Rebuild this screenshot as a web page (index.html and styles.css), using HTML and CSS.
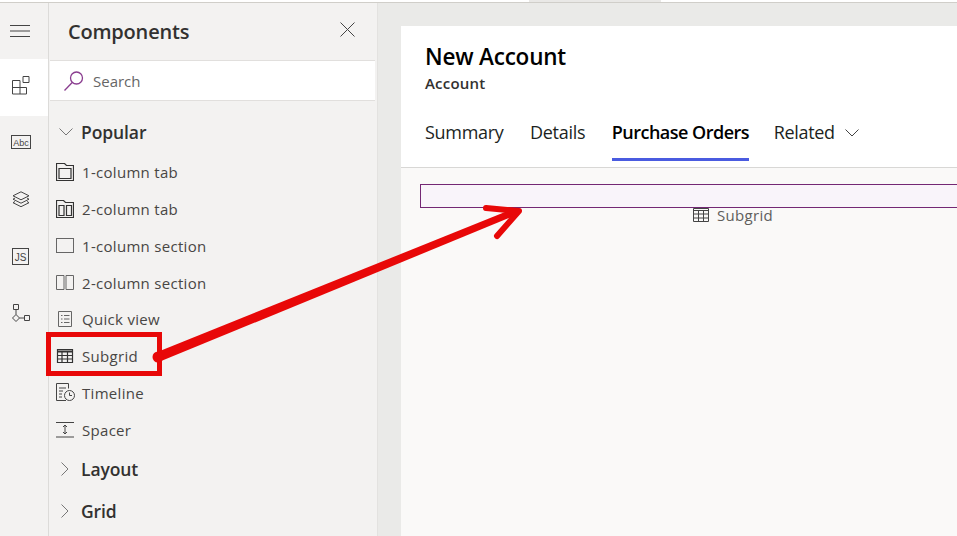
FILE: index.html
```html
<!DOCTYPE html>
<html lang="en">

<head>
    <meta charset="UTF-8">
    <title>New Account - Form Designer</title>
    <link rel="stylesheet" href="styles.css">
</head>

<body>
    <div class="top-strip"><span class="top-tab"></span></div>

    <div class="app">
        <nav class="rail">
            <div class="rail-menu">
                <svg width="20" height="12" viewBox="0 0 20 12"><path d="M0 .5h20M0 6h20M0 11.500h20" class="ico"/></svg>
            </div>
            <div class="rail-item rail-active">
                <svg width="20" height="20" viewBox="0 0 20 20"><path d="M1.500 5.500h7.500v7h6.500v6.500h-14zM1.500 12.500h7.500M9 12.500v6.500M12 1.500h6v6h-6z" class="ico"/></svg>
            </div>
            <div class="rail-item">
                <svg width="20" height="14" viewBox="0 0 20 14"><rect x=".5" y=".5" width="19" height="13" class="ico"/><text x="10" y="10.500" class="abc">Abc</text></svg>
            </div>
            <div class="rail-item">
                <svg width="18" height="17" viewBox="0 0 18 17"><path d="M9 .8l8 4-8 4-8-4zM3 7l-2 1.200 8 4 8-4-2-1.200M3 10.500l-2 1.200 8 4 8-4-2-1.200" class="ico"/></svg>
            </div>
            <div class="rail-item">
                <svg width="17" height="17" viewBox="0 0 17 17"><rect x=".5" y=".5" width="16" height="16" class="ico"/><text x="8.500" y="13" class="js">JS</text></svg>
            </div>
            <div class="rail-item">
                <svg width="18" height="18" viewBox="0 0 18 18"><path d="M1.500.5h5v5h-5zM4 5.500v5M4 10.500l3.500 3.500-3.500 3.500-3.500-3.500zM7.500 14h5M12.500 11.500h5v5h-5z" class="ico"/></svg>
            </div>
        </nav>

        <aside class="panel">
            <div class="panel-head">
                <h2>Components</h2>
                <svg width="15" height="15" viewBox="0 0 15 15"><path d="M.5.500l14 14M14.500.500l-14 14" class="ico"/></svg>
            </div>

            <div class="search">
                <svg width="20" height="20" viewBox="0 0 20 20"><circle cx="12.500" cy="7" r="6" class="ico-purple"/><path d="M8.200 11.500L.5 19.500" class="ico-purple"/></svg>
                <span>Search</span>
            </div>

            <div class="group">
                <svg width="14" height="8" viewBox="0 0 14 8"><path d="M.5.500L7 7l6.500-6.500" class="ico-light"/></svg>
                <span>Popular</span>
            </div>

            <ul class="items">
                <li>
                    <svg width="18" height="18" viewBox="0 0 18 18"><path d="M.5 17.500V.5h8l2 2h7v15zM3 5.500h12v10H3z" class="ico-dark"/></svg>
                    1-column tab
                </li>
                <li>
                    <svg width="18" height="18" viewBox="0 0 18 18"><path d="M.5 17.500V.5h7l2 2h8v15zM3 5.500h5v10H3zM10.500 5.500h5v10h-5z" class="ico-dark"/></svg>
                    2-column tab
                </li>
                <li>
                    <svg width="18" height="15" viewBox="0 0 18 15"><rect x=".5" y=".5" width="17" height="14" class="ico-grey"/></svg>
                    1-column section
                </li>
                <li>
                    <svg width="18" height="15" viewBox="0 0 18 15"><path d="M.5.500h7.500v14H.5zM10 .5h7.500v14H10z" class="ico-grey"/></svg>
                    2-column section
                </li>
                <li>
                    <svg width="18" height="16" viewBox="0 0 18 16"><path d="M2.500.5h13v15h-13zM5 4.500h1.500M8 4.500h5.500M5 8h1.500M8 8h5.500M5 11.500h1.500M8 11.500h5.500" class="ico-grey"/></svg>
                    Quick view
                </li>
                <li>
                    <svg width="18" height="14" viewBox="0 0 18 14"><path d="M1.500.5h15v13h-15zM1.500 2h15M1.500 2.800h15M1.500 6.500h15M1.500 10h15M6 2.500v11M11.500 2.500v11" class="ico-dark"/></svg>
                    Subgrid
                </li>
                <li>
                    <svg class="ico-wide" width="20" height="19" viewBox="0 0 20 19"><path d="M10 17.500H.5V.5h12v5M3 5h7M3 8h4M3 11h3M3 14h3" class="ico"/><circle cx="13.500" cy="12.500" r="5" class="ico"/><path d="M13.500 9.500v3h2.500" class="ico"/></svg>
                    Timeline
                </li>
                <li>
                    <svg width="18" height="16" viewBox="0 0 18 16"><path d="M0 .5h18M0 15h18M9 3v9M7 5l2-2 2 2M7 10l2 2 2-2" class="ico"/></svg>
                    Spacer
                </li>
            </ul>

            <div class="group group-layout">
                <svg width="8" height="14" viewBox="0 0 8 14"><path d="M.5.500L7 7 .5 13.500" class="ico-light"/></svg>
                <span>Layout</span>
            </div>
            <div class="group group-grid">
                <svg width="8" height="14" viewBox="0 0 8 14"><path d="M.5.500L7 7 .5 13.500" class="ico-light"/></svg>
                <span>Grid</span>
            </div>
        </aside>

        <main class="canvas">
            <section class="form">
                <header class="form-head">
                    <h1>New Account</h1>
                    <p class="entity">Account</p>
                    <div class="tabs">
                        <a class="tab">Summary</a>
                        <a class="tab">Details</a>
                        <a class="tab tab-active">Purchase Orders</a>
                        <a class="tab">Related
                            <svg width="14" height="8" viewBox="0 0 14 8"><path d="M.5.500L7 7l6.500-6.500" class="ico"/></svg>
                        </a>
                    </div>
                </header>
                <div class="form-body">
                    <div class="drop-section"></div>
                    <div class="subgrid-label">
                        <svg width="16" height="14" viewBox="0 0 16 14"><path d="M.5.500h15v13H.5zM.5 2.500h15M.5 6h15M.5 10h15M5.500 2.500v11M10.500 2.500v11" class="ico"/></svg>
                        Subgrid
                    </div>
                </div>
            </section>
        </main>
    </div>

    <!-- callout drawn over the screenshot -->
    <div class="callout-box"></div>
    <svg class="callout-arrow" width="957" height="536" viewBox="0 0 957 536">
        <path d="M159.900 361.600L518.300 214.200L515.700 207.800L156.100 352.400Z" class="arrow-fill"/>
        <circle cx="158" cy="357" r="5.500" class="arrow-fill"/>
        <path d="M486 208L519 211L497 236" class="arrow-head"/>
    </svg>
</body>

</html>
```

FILE: styles.css
```css
* {
    box-sizing: border-box;
}

body {
    margin: 0;
    width: 957px;
    height: 536px;
    overflow: hidden;
    position: relative;
    font-family: "Open Sans", "Noto Sans", sans-serif;
    background: #fff;
    color: #333;
    display: flex;
    flex-direction: column;
}

svg {
    flex: none;
    display: block;
}

.ico {
    fill: none;
    stroke: #444;
    stroke-width: 1;
}

.ico-dark {
    fill: none;
    stroke: #333;
    stroke-width: 1.2;
}

.ico-grey {
    fill: none;
    stroke: #666;
    stroke-width: 1;
}

.ico-light {
    fill: none;
    stroke: #777;
    stroke-width: 1;
}

.ico-purple {
    fill: none;
    stroke: #8a3d8f;
    stroke-width: 1.3;
}

.abc {
    font-size: 9px;
    font-family: "Liberation Sans", sans-serif;
    fill: #444;
    text-anchor: middle;
}

.js {
    font-size: 10px;
    font-family: "Liberation Sans", sans-serif;
    fill: #444;
    text-anchor: middle;
}

.top-strip {
    height: 3px;
    flex: none;
    border-bottom: 1px solid #d0cec9;
    padding-left: 529px;
}

.top-tab {
    display: block;
    width: 132px;
    height: 2px;
    background: #e9e8e6;
}

.app {
    flex: 1;
    display: flex;
    min-height: 0;
}

/* left icon rail */
.rail {
    width: 49px;
    flex: none;
    background: #f3f2f1;
    border-right: 1px solid #dcdbd9;
}

.rail-menu {
    height: 56px;
    padding: 22px 0 0 10px;
}

.rail-item {
    height: 57px;
    display: flex;
    align-items: center;
    justify-content: center;
    padding: 0 7px 5px 0;
}

.rail-active {
    background: #fff;
}

/* components panel */
.panel {
    width: 328px;
    flex: none;
    background: #f3f2f1;
}

.panel-head {
    height: 57px;
    padding: 0 22px 0 19px;
    display: flex;
    align-items: center;
    justify-content: space-between;
}

.panel-head svg {
    margin-bottom: 5px;
}

.panel-head h2 {
    margin: 0;
    font-size: 20px;
    font-weight: 600;
    color: #323130;
    letter-spacing: -0.2px;
}

.search {
    height: 41px;
    margin: 0 2px 0 1px;
    padding-left: 14px;
    background: #fff;
    border-top: 1px solid #e1dfdd;
    border-bottom: 1px solid #e1dfdd;
    display: flex;
    align-items: center;
    gap: 9px;
    font-size: 15px;
    color: #666;
}

.group {
    display: flex;
    align-items: center;
    gap: 8px;
    height: 32px;
    margin-top: 15px;
    padding-left: 10px;
    font-size: 17.500px;
    font-weight: 600;
    color: #323130;
    letter-spacing: -0.1px;
}

.items {
    list-style: none;
    margin: 6px 0 0;
    padding: 0;
}

.items li {
    height: 36.750px;
    display: flex;
    align-items: center;
    font-size: 15px;
    color: #484644;
    letter-spacing: 0.3px;
    padding-left: 7px;
    gap: 8px;
}

.items .ico-wide {
    margin-right: -2px;
}

.group-layout {
    margin-top: 5px;
    padding-left: 12px;
    gap: 12px;
}

.group-grid {
    margin-top: 10px;
    padding-left: 12px;
    gap: 12px;
}

/* form canvas */
.canvas {
    flex: 1;
    min-width: 0;
    background: #eaeae8;
    padding: 23px 0 0 23px;
    border-left: 1px solid #e3e2e0;
}

.form {
    height: 100%;
    display: flex;
    flex-direction: column;
    background: #faf9f8;
}

.form-head {
    height: 142px;
    flex: none;
    background: #fff;
    border-bottom: 1px solid #d8d7d5;
    padding: 15px 0 0 24px;
}

.form-head h1 {
    margin: 0;
    font-size: 22.500px;
    line-height: 32px;
    font-weight: 600;
    color: #000;
    letter-spacing: -0.2px;
}

.entity {
    margin: 0;
    font-size: 15px;
    line-height: 20px;
    font-weight: 600;
    color: #323130;
    letter-spacing: 0.2px;
}

.tabs {
    display: flex;
    gap: 26.500px;
    margin-top: 23px;
}

.tab {
    height: 45px;
    padding-top: 4px;
    font-size: 18px;
    line-height: 24px;
    color: #201f1e;
    letter-spacing: -0.3px;
    display: flex;
    align-items: flex-start;
}

.tab svg {
    margin: 9px 0 0 10px;
}

.tab-active {
    font-weight: 600;
    color: #000;
    border-bottom: 3px solid #4a5be0;
    letter-spacing: -0.5px;
    margin-right: -2px;
}

.form-body {
    flex: 1;
    padding: 16px 0 0 19px;
}

.drop-section {
    height: 24px;
    background: #f9f4fa;
    border: 1px solid #742774;
    border-right: 0;
}

.subgrid-label {
    display: flex;
    align-items: center;
    gap: 8px;
    margin: -2px 0 0 273px;
    height: 18px;
    font-size: 15px;
    color: #605e5c;
    letter-spacing: 0.3px;
}

/* red callout */
.callout-box {
    position: absolute;
    left: 46px;
    top: 332px;
    width: 116px;
    height: 44px;
    border: 5px solid #e80808;
}

.callout-arrow {
    position: absolute;
    left: 0;
    top: 0;
}

.arrow-fill {
    fill: #e80808;
}

.arrow-head {
    fill: none;
    stroke: #e80808;
    stroke-width: 6;
    stroke-linecap: round;
    stroke-linejoin: round;
}
```
